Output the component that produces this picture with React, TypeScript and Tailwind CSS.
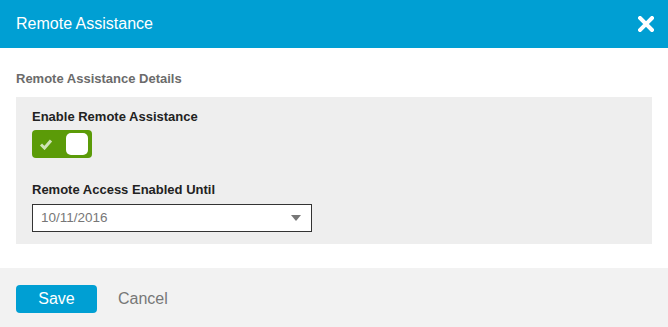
import React from "react";

export default function App() {
  return (
    <div className="w-[668px] h-[327px] flex flex-col bg-white" style={{ fontFamily: '"Liberation Sans", Arial, sans-serif' }}>
      <div className="h-[48px] bg-[#009fd3] flex items-center justify-between pl-[16px] pr-[14px]">
        <span className="text-white text-[16px]">Remote Assistance</span>
        <svg width="16" height="16" viewBox="0 0 16 16">
          <path d="M2 2 L14 14 M14 2 L2 14" stroke="#fff" strokeWidth="4" strokeLinecap="square" />
        </svg>
      </div>
      <div className="flex-1 px-[16px] pt-[23px]">
        <div className="text-[13px] font-bold text-[#6b6b6b] leading-[15px]">Remote Assistance Details</div>
        <div className="mt-[11px] bg-[#eeeeee] h-[147px] px-[16px] pt-[12px]">
          <div className="text-[13px] font-bold text-[#222] leading-[15px]">Enable Remote Assistance</div>
          <div className="mt-[6px] w-[60px] h-[28px] rounded-[4px] bg-[#5b9b08] flex items-center justify-between pl-[7px] pr-[4px]">
            <svg width="14" height="12" viewBox="0 0 14 12">
              <path d="M2 6.5 L5.5 10 L12 2.5" stroke="#cfe3b5" strokeWidth="3" fill="none" />
            </svg>
            <div className="w-[22px] h-[22px] rounded-[5px] bg-white" />
          </div>
          <div className="mt-[24px] text-[13px] font-bold text-[#222] leading-[15px]">Remote Access Enabled Until</div>
          <div className="mt-[7px] w-[280px] h-[28px] border border-[#333] bg-white flex items-center justify-between pl-[8px] pr-[10px]">
            <span className="text-[13.5px] text-[#777]">10/11/2016</span>
            <svg width="10" height="6" viewBox="0 0 10 6">
              <path d="M0 0 L10 0 L5 6 Z" fill="#777" />
            </svg>
          </div>
        </div>
      </div>
      <div className="h-[59px] bg-[#f2f2f2] flex items-center px-[16px] gap-[21px] pt-[2px]">
        <button className="w-[81px] h-[28px] rounded-[4px] bg-[#009fd3] text-white text-[16px]">Save</button>
        <span className="text-[16px] text-[#777]">Cancel</span>
      </div>
    </div>
  );
}
